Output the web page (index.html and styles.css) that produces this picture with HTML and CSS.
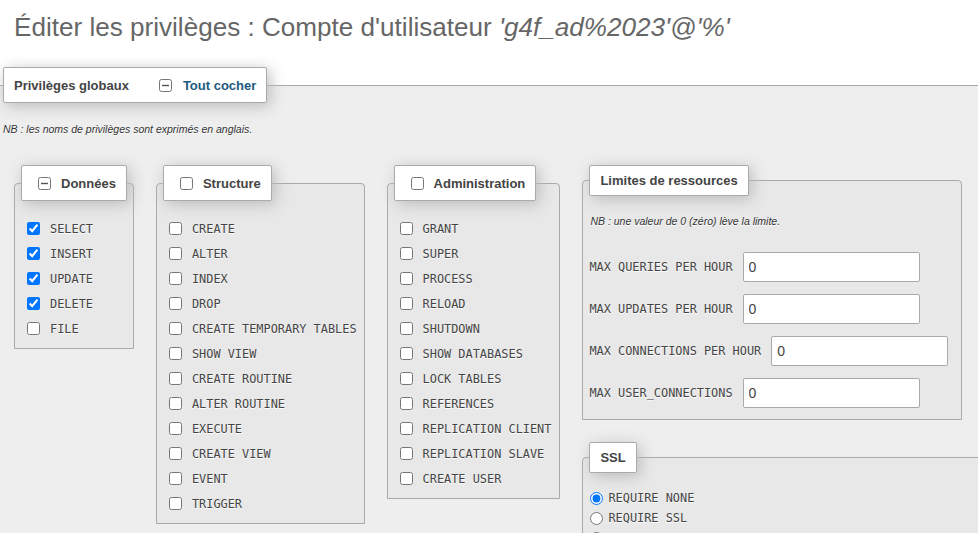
FILE: index.html
```
<!DOCTYPE html>
<html lang="fr">
<head>
<meta charset="utf-8">
<title>Éditer les privilèges</title>
<link rel="stylesheet" href="styles.css">
</head>
<body>
<h2 class="page-title">Éditer les privilèges : Compte d'utilisateur <i>'g4f_ad%2023'@'%'</i></h2>

<fieldset class="main">
  <legend class="lg"><span class="lg-in">
    <span class="lg-text">Privilèges globaux</span>
    <svg class="minus-box main-box" width="13" height="13" viewBox="0 0 13 13"><rect x="0.5" y="0.5" width="12" height="12" rx="2" fill="#fff" stroke="#767676"/><line x1="3" y1="6.5" x2="10" y2="6.5" stroke="#555" stroke-width="1.4"/></svg>
    <a class="check-all" href="#">Tout cocher</a>
  </span></legend>
  <p class="note">NB : les noms de privilèges sont exprimés en anglais.</p>

  <div class="groups">
    <fieldset class="group group-data">
      <legend class="lg lg-box"><span class="lg-in">
        <svg class="minus-box" width="13" height="13" viewBox="0 0 13 13"><rect x="0.5" y="0.5" width="12" height="12" rx="2" fill="#fff" stroke="#767676"/><line x1="3" y1="6.5" x2="10" y2="6.5" stroke="#555" stroke-width="1.4"/></svg>
        <span class="lg-text">Données</span>
      </span></legend>
      <div class="privs">
        <label class="priv"><input type="checkbox" checked><code>SELECT</code></label>
        <label class="priv"><input type="checkbox" checked><code>INSERT</code></label>
        <label class="priv"><input type="checkbox" checked><code>UPDATE</code></label>
        <label class="priv"><input type="checkbox" checked><code>DELETE</code></label>
        <label class="priv"><input type="checkbox"><code>FILE</code></label>
      </div>
    </fieldset>

    <fieldset class="group">
      <legend class="lg lg-box"><span class="lg-in">
        <input type="checkbox" class="lg-check">
        <span class="lg-text">Structure</span>
      </span></legend>
      <div class="privs">
        <label class="priv"><input type="checkbox"><code>CREATE</code></label>
        <label class="priv"><input type="checkbox"><code>ALTER</code></label>
        <label class="priv"><input type="checkbox"><code>INDEX</code></label>
        <label class="priv"><input type="checkbox"><code>DROP</code></label>
        <label class="priv"><input type="checkbox"><code>CREATE TEMPORARY TABLES</code></label>
        <label class="priv"><input type="checkbox"><code>SHOW VIEW</code></label>
        <label class="priv"><input type="checkbox"><code>CREATE ROUTINE</code></label>
        <label class="priv"><input type="checkbox"><code>ALTER ROUTINE</code></label>
        <label class="priv"><input type="checkbox"><code>EXECUTE</code></label>
        <label class="priv"><input type="checkbox"><code>CREATE VIEW</code></label>
        <label class="priv"><input type="checkbox"><code>EVENT</code></label>
        <label class="priv"><input type="checkbox"><code>TRIGGER</code></label>
      </div>
    </fieldset>

    <fieldset class="group group-admin">
      <legend class="lg lg-box"><span class="lg-in">
        <input type="checkbox" class="lg-check">
        <span class="lg-text">Administration</span>
      </span></legend>
      <div class="privs">
        <label class="priv"><input type="checkbox"><code>GRANT</code></label>
        <label class="priv"><input type="checkbox"><code>SUPER</code></label>
        <label class="priv"><input type="checkbox"><code>PROCESS</code></label>
        <label class="priv"><input type="checkbox"><code>RELOAD</code></label>
        <label class="priv"><input type="checkbox"><code>SHUTDOWN</code></label>
        <label class="priv"><input type="checkbox"><code>SHOW DATABASES</code></label>
        <label class="priv"><input type="checkbox"><code>LOCK TABLES</code></label>
        <label class="priv"><input type="checkbox"><code>REFERENCES</code></label>
        <label class="priv"><input type="checkbox"><code>REPLICATION CLIENT</code></label>
        <label class="priv"><input type="checkbox"><code>REPLICATION SLAVE</code></label>
        <label class="priv"><input type="checkbox"><code>CREATE USER</code></label>
      </div>
    </fieldset>

    <div class="side">
      <fieldset class="group limits">
        <legend class="lg"><span class="lg-in"><span class="lg-text">Limites de ressources</span></span></legend>
        <p class="note note-limits">NB : une valeur de 0 (zéro) lève la limite.</p>
        <div class="limit-row"><code>MAX QUERIES PER HOUR</code><input class="num" type="text" value="0"></div>
        <div class="limit-row"><code>MAX UPDATES PER HOUR</code><input class="num" type="text" value="0"></div>
        <div class="limit-row"><code>MAX CONNECTIONS PER HOUR</code><input class="num" type="text" value="0"></div>
        <div class="limit-row"><code>MAX USER_CONNECTIONS</code><input class="num" type="text" value="0"></div>
      </fieldset>

      <fieldset class="group ssl">
        <legend class="lg"><span class="lg-in"><span class="lg-text">SSL</span></span></legend>
        <label class="radio-row"><input type="radio" name="ssl" checked><code>REQUIRE NONE</code></label>
        <label class="radio-row"><input type="radio" name="ssl"><code>REQUIRE SSL</code></label>
        <label class="radio-row"><input type="radio" name="ssl"><code>REQUIRE X509</code></label>
      </fieldset>
    </div>
  </div>
</fieldset>
</body>
</html>
```
FILE: styles.css
```
html, body {
  margin: 0;
  padding: 0;
  overflow: hidden;
  background: #fff;
}
body {
  font-family: "Liberation Sans", Arial, sans-serif;
  font-size: 13px;
  color: #444;
  width: 978px;
  height: 533px;
}
code {
  font-family: "DejaVu Sans Mono", monospace;
  font-size: 11.9px;
  color: #444;
}
.page-title {
  margin: 0;
  padding: 12px 0 0 14px;
  font-size: 26.1px;
  line-height: 30px;
  font-weight: normal;
  color: #666;
  white-space: nowrap;
}
.page-title i {
  font-style: italic;
}
fieldset {
  margin: 0;
  min-width: 0;
}
.main {
  margin-top: 25px;
  border: 0;
  border-top: 1px solid #aaa;
  background: #eee;
  padding: 0 0 40px 3px;
  text-shadow: 0 1px 0 #fff;
  width: 1100px;
}
.lg {
  padding: 0 10px;
  background: #fff;
  border: 1px solid #aaa;
  border-radius: 2px;
  box-shadow: 3px 3px 15px #bbb;
  font-weight: bold;
  color: #444;
  text-shadow: none;
}
.lg-in {
  display: flex;
  align-items: center;
  height: 29px;
  white-space: nowrap;
}
.main > .lg .lg-in,
.lg-box .lg-in {
  height: 34px;
}
.lg-box {
  padding-left: 16px;
}
.main-box {
  margin-left: 30px;
}
.minus-box {
  display: block;
  flex: none;
}
.check-all {
  color: #235a81;
  text-decoration: none;
  margin-left: 11px;
}
.lg-box .lg-text {
  margin-left: 10px;
}
.lg-check {
  margin: 0;
  width: 13px;
  height: 13px;
}
.note {
  margin: 20px 0 0;
  font-size: 10.5px;
  line-height: 13px;
  font-style: italic;
  color: #333;
}
.groups {
  display: flex;
  align-items: flex-start;
  gap: 22px;
  margin: 29px 0 0 11px;
}
.group {
  border: 1px solid #aaa;
  border-radius: 4px 4px 0 0;
  background: #e8e8e8;
  padding: 15px 7px 7px 6px;
}
.group-data {
  padding-right: 6px;
}
.group-admin {
  padding-right: 8px;
}
.privs {
  display: flex;
  flex-direction: column;
  padding-left: 6px;
}
.priv {
  display: flex;
  align-items: center;
  gap: 10px;
  height: 25px;
  white-space: nowrap;
}
.priv input {
  margin: 0;
  width: 13px;
  height: 13px;
}
.side {
  display: flex;
  flex-direction: column;
  align-items: flex-start;
  gap: 22px;
}
.limits {
  padding: 19px 13px 11px 6px;
}
.note-limits {
  margin: 0 0 24px 1px;
}
.limit-row {
  display: flex;
  align-items: center;
  gap: 10px;
  margin: 0 0 12px 0;
  white-space: nowrap;
}
.limit-row:last-child {
  margin-bottom: 0;
}
.num {
  box-sizing: border-box;
  width: 177px;
  height: 30px;
  margin: 0;
  border: 1px solid #aaa;
  border-radius: 2px;
  background: #fff;
  padding: 0 5px;
  font-family: "Liberation Sans", Arial, sans-serif;
  font-size: 14px;
  color: #444;
}
.ssl {
  width: 440px;
  padding: 15px 6px 20px 6px;
}
.radio-row {
  display: flex;
  align-items: center;
  gap: 5px;
  height: 20px;
  margin-left: 1px;
  white-space: nowrap;
}
.radio-row input {
  margin: 0;
  width: 13px;
  height: 13px;
}
```
